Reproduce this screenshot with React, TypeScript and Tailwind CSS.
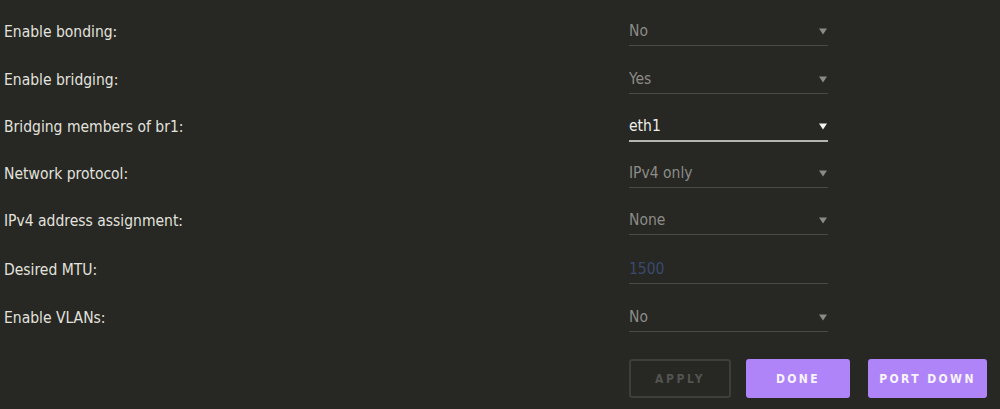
const rows = [
  { label: 'Enable bonding:', value: 'No', kind: 'select', h: 'h-[47px]' },
  { label: 'Enable bridging:', value: 'Yes', kind: 'select', h: 'h-[48px]' },
  { label: 'Bridging members of br1:', value: 'eth1', kind: 'active', h: 'h-[47px]' },
  { label: 'Network protocol:', value: 'IPv4 only', kind: 'select', h: 'h-[47px]' },
  { label: 'IPv4 address assignment:', value: 'None', kind: 'select', h: 'h-[47px]' },
  { label: 'Desired MTU:', value: '1500', kind: 'input', h: 'h-[49px]' },
  { label: 'Enable VLANs:', value: 'No', kind: 'select', h: 'h-[48px]' },
]

function Arrow({ active }: { active?: boolean }) {
  return (
    <svg width="8" height="8" viewBox="0 0 8 8" className="shrink-0 mr-[1px]">
      <path d="M0 1.5h8L4 7.5z" fill={active ? '#f4f4f4' : '#8a8a86'} />
    </svg>
  )
}

function Field({ value, kind }: { value: string; kind: string }) {
  const active = kind === 'active'
  return (
    <div
      className={`w-[199px] flex items-end justify-between pb-[4px] ${
        active ? 'border-b-2 border-[#b5b5b0]' : 'border-b border-[#4a4a46]'
      }`}
    >
      <span
        className={`text-[15.5px] leading-5 ${
          active ? 'text-[#eeeeea]' : kind === 'input' ? 'text-[#3a4a6e]' : 'text-[#8c8c88]'
        }`}
      >
        {value}
      </span>
      {kind !== 'input' && (
        <div className="h-5 flex items-center">
          <Arrow active={active} />
        </div>
      )}
    </div>
  )
}

export default function App() {
  return (
    <div className="w-[1000px] h-[409px] bg-[#272723] overflow-hidden font-['DejaVu_Sans_Condensed','DejaVu_Sans',sans-serif] font-stretch-condensed">
      <div className="flex flex-col">
        {rows.map((r) => (
          <div key={r.label} className={`flex ${r.h}`}>
            <div className="w-[629px] pl-1 flex items-end pb-[5px]">
              <span className="text-[15.5px] leading-5 text-[#e2e2de]">{r.label}</span>
            </div>
            <div className={`flex items-end ${r.kind === 'active' ? '' : 'pb-[1px]'}`}>
              <Field value={r.value} kind={r.kind} />
            </div>
          </div>
        ))}
      </div>
      <div className="flex pl-[629px] mt-[26px]">
        <button className="w-[102px] h-[39px] rounded-[3px] border-2 border-[#3e3e3a] text-[12px] font-bold tracking-[0.22em] text-[#53534f]">
          APPLY
        </button>
        <button className="ml-[15px] w-[104px] h-[39px] rounded-[3px] bg-[#b084f9] text-[12px] font-bold tracking-[0.2em] text-[#f8f4ff]">
          DONE
        </button>
        <button className="ml-[18px] w-[119px] h-[39px] rounded-[3px] bg-[#b084f9] text-[12px] font-bold tracking-[0.2em] text-[#f8f4ff]">
          PORT DOWN
        </button>
      </div>
    </div>
  )
}
